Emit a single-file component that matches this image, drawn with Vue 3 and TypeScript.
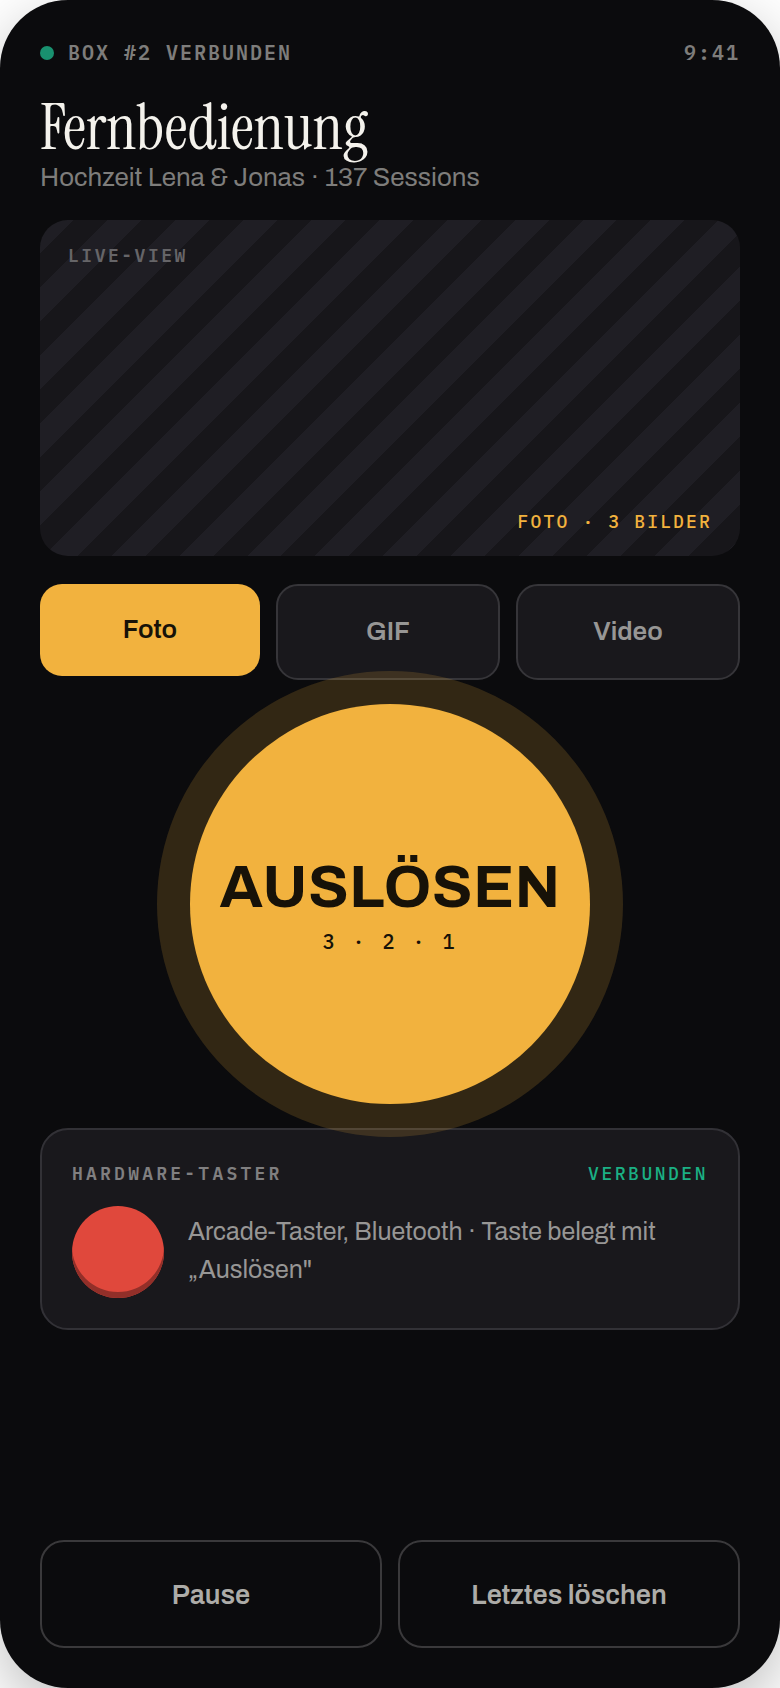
<script setup lang="ts">
import { ref } from 'vue'

type Mode = 'Foto' | 'GIF' | 'Video'

const modes: Mode[] = ['Foto', 'GIF', 'Video']
const mode = ref<Mode>('Foto')
const captions: Record<Mode, string> = {
  Foto: 'FOTO · 3 BILDER',
  GIF: 'GIF',
  Video: 'VIDEO',
}
</script>

<template>
  <main class="phone">
    <header class="status">
      <span class="link"><i class="dot"></i>BOX #2 VERBUNDEN</span>
      <time>9:41</time>
    </header>

    <h1>Fernbedienung</h1>
    <p class="event">Hochzeit Lena &amp; Jonas · 137 Sessions</p>

    <section class="live" aria-label="Live-View">
      <span class="live-label">LIVE-VIEW</span>
      <span class="live-mode">{{ captions[mode] }}</span>
    </section>

    <div class="modes">
      <button
        v-for="m in modes"
        :key="m"
        type="button"
        class="mode"
        :class="{ active: m === mode }"
        :aria-pressed="m === mode"
        @click="mode = m"
      >{{ m }}</button>
    </div>

    <button type="button" class="trigger">
      <span class="trigger-label">AUSLÖSEN</span>
      <span class="countdown">3 · 2 · 1</span>
    </button>

    <section class="hardware">
      <div class="hardware-head">
        <h2>HARDWARE-TASTER</h2>
        <span class="state">VERBUNDEN</span>
      </div>
      <div class="hardware-body">
        <span class="arcade"></span>
        <p>Arcade-Taster, Bluetooth · Taste belegt mit „Auslösen"</p>
      </div>
    </section>

    <footer class="actions">
      <button type="button">Pause</button>
      <button type="button">Letztes löschen</button>
    </footer>
  </main>
</template>

<style>
body {
  margin: 0;
  background: #fff;
}
</style>

<style scoped>
.phone {
  box-sizing: border-box;
  min-height: 100vh;
  padding: 40px;
  display: flex;
  flex-direction: column;
  border-radius: 68px;
  background: #0b0b0d;
  box-shadow: 0 20px 60px rgba(0, 0, 0, 0.25);
  color: #f4f2ec;
  font-family: Archivo, "Liberation Sans", Arial, sans-serif;
}

h1,
h2,
p {
  margin: 0;
  font-weight: 400;
}

button {
  margin: 0;
  border: 0;
  font-family: inherit;
  cursor: pointer;
}

.status,
.live,
.countdown,
.hardware-head,
.hardware-head h2 {
  font-family: "IBM Plex Mono", "DejaVu Sans Mono", monospace;
}

.status {
  display: flex;
  justify-content: space-between;
  align-items: center;
  font-size: 20px;
  line-height: 26px;
  letter-spacing: 0.1em;
  color: #7e7d7b;
  font-weight: 600;
}

.link {
  display: flex;
  align-items: center;
  gap: 14px;
}

.dot {
  width: 14px;
  height: 14px;
  border-radius: 50%;
  background: #19916f;
}

h1 {
  margin-top: 32px;
  font-family: "Instrument Serif", "Liberation Serif", "Times New Roman", serif;
  font-size: 64px;
  line-height: 60px;
}

.event {
  margin-top: 4px;
  font-size: 26px;
  line-height: 30px;
  color: #7e7d7b;
}

.live {
  box-sizing: border-box;
  height: 336px;
  margin-top: 28px;
  padding: 25px 28px 23px;
  display: flex;
  flex-direction: column;
  justify-content: space-between;
  border-radius: 28px;
  background: repeating-linear-gradient(135deg, #1f1e24 0 24px, #17161a 24px 48px);
  font-size: 18px;
  font-weight: 500;
  line-height: 22px;
}

.live-label {
  font-weight: 600;
  letter-spacing: 0.14em;
  color: #666568;
}

.live-mode {
  align-self: flex-end;
  letter-spacing: 0.12em;
  color: #f2b23e;
}

.modes {
  margin-top: 28px;
  display: flex;
  align-items: flex-start;
  gap: 16px;
}

.mode {
  box-sizing: content-box;
  flex: 1;
  padding: 29px 0 31px;
  border: 2px solid #363539;
  border-radius: 22px;
  background: #19181c;
  color: #979695;
  font-size: 26px;
  line-height: 32px;
  font-weight: 600;
}

.mode.active {
  border: 0;
  background: #f2b23e;
  color: #171208;
}

.trigger {
  position: relative;
  align-self: center;
  width: 400px;
  height: 400px;
  margin: 24px 0;
  padding: 0;
  display: flex;
  flex-direction: column;
  align-items: center;
  justify-content: center;
  gap: 10px;
  border-radius: 50%;
  background: #f2b23e;
  box-shadow: 0 0 0 33px rgba(242, 178, 62, 0.17);
  color: #171208;
}

.trigger-label {
  font-size: 60px;
  line-height: 66px;
  font-weight: 700;
  letter-spacing: 0.01em;
}

.countdown {
  font-size: 20px;
  font-weight: 500;
  line-height: 24px;
  letter-spacing: 0.15em;
}

.hardware {
  padding: 30px;
  border: 2px solid #323136;
  border-radius: 28px;
  background: #19181c;
}

.hardware-head {
  display: flex;
  justify-content: space-between;
  font-size: 18px;
  font-weight: 500;
  line-height: 28px;
}

.hardware-head h2 {
  font-size: 18px;
  font-weight: 600;
  letter-spacing: 0.18em;
  color: #807f80;
}

.state {
  letter-spacing: 0.14em;
  color: #1bb084;
}

.hardware-body {
  margin-top: 18px;
  display: flex;
  align-items: center;
  gap: 24px;
}

.arcade {
  flex: none;
  width: 92px;
  height: 92px;
  border-radius: 50%;
  background: #e0483c;
  box-shadow: inset 0 -6px 0 #922f29;
}

.hardware-body p {
  padding-bottom: 2px;
  font-size: 25px;
  line-height: 38px;
  color: #979695;
}

.actions {
  margin-top: auto;
  display: flex;
  gap: 16px;
}

.actions button {
  flex: 1 1 0;
  padding: 37px 0 35px;
  border: 2px solid #3a393b;
  border-radius: 24px;
  background: transparent;
  color: #adaca8;
  font-size: 27px;
  line-height: 32px;
  font-weight: 600;
}
</style>
